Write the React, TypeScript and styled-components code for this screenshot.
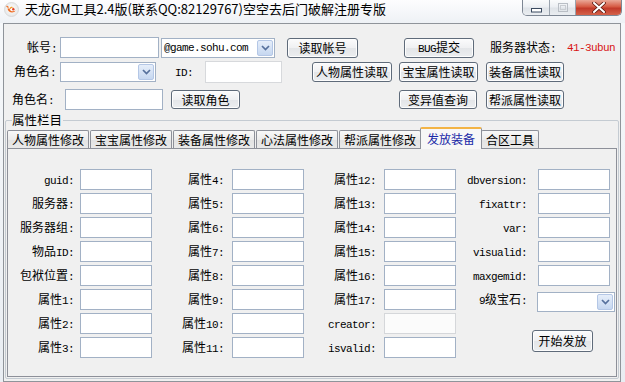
import React from "react";
import styled, { createGlobalStyle, css } from "styled-components";

const CJK = `"Noto Sans CJK SC", "Noto Sans", sans-serif`;
const MONO = `"Liberation Mono", "DejaVu Sans Mono", monospace`;

const GlobalStyle = createGlobalStyle`
  html, body { margin: 0; padding: 0; background: #ffffff; }
  body { font-family: ${CJK}; font-size: 12px; color: #000; }
  * { box-sizing: border-box; }
`;

const Latin = styled.span`
  font-family: ${MONO};
  font-size: 11px;
  letter-spacing: -0.6px;
`;

function Mixed({ text }: { text: string }) {
  const parts = text.match(/[\x00-\x7f]+|[^\x00-\x7f]+/g) || [];
  return (
    <>
      {parts.map((p, i) =>
        /^[\x00-\x7f]/.test(p) ? <Latin key={i}>{p}</Latin> : <span key={i}>{p}</span>
      )}
    </>
  );
}

/* ---------- window chrome ---------- */

const Window = styled.div`
  width: 625px;
  height: 382px;
  display: flex;
  flex-direction: column;
  overflow: hidden;
  background: linear-gradient(#f7f9fb, #e9edf2);
`;

const TitleBar = styled.div`
  height: 23px;
  flex: none;
  display: flex;
  align-items: flex-start;
  padding-left: 4px;
  background: linear-gradient(to bottom, #fdfdfe 0%, #f4f6f9 60%, #eef1f5 100%);
`;

const IconBox = styled.div`
  width: 15px;
  height: 15px;
  margin-top: 2px;
  flex: none;
  display: flex;
`;

const TitleText = styled.div`
  margin-left: 6px;
  margin-top: 1px;
  font-family: ${CJK};
  font-size: 13px;
  line-height: 16px;
  white-space: nowrap;
  color: #000;
`;

const Caption = styled.div`
  margin-left: auto;
  margin-right: 3px;
  display: flex;
  height: 16px;
  border: 1px solid #7d8693;
  border-top: none;
  border-radius: 0 0 5px 5px;
  overflow: hidden;
`;

const CapBtn = styled.div<{ $w: number; $close?: boolean }>`
  width: ${(p) => p.$w}px;
  display: flex;
  align-items: center;
  justify-content: center;
  background: ${(p) =>
    p.$close
      ? "linear-gradient(#eaa898 0%, #d65a43 45%, #c23a2a 55%, #d4624a 100%)"
      : "linear-gradient(#fafbfc 0%, #eceff3 45%, #dfe3e8 55%, #eaedf1 100%)"};
  & + & {
    border-left: 1px solid #9aa3ae;
  }
`;

const Client = styled.div`
  flex: 1;
  margin: 0 4px 0 3px;
  border: 1px solid #8f949a;
  background: #f0f0f0;
  display: flex;
  flex-direction: column;
`;

/* ---------- top form ---------- */

const Form = styled.div`
  padding-top: 13px;
  display: flex;
  flex-direction: column;
`;

const Row = styled.div<{ $h: number; $mt?: number }>`
  display: flex;
  align-items: center;
  height: ${(p) => p.$h}px;
  margin-top: ${(p) => p.$mt ?? 0}px;
`;

const Label = styled.div<{ $w?: number; $ml?: number; $align?: "left" | "right" }>`
  flex: none;
  ${(p) => (p.$w ? `width: ${p.$w}px;` : "")}
  margin-left: ${(p) => p.$ml ?? 0}px;
  text-align: ${(p) => p.$align ?? "left"};
  white-space: nowrap;
  line-height: 14px;
`;

const Status = styled.div<{ $ml: number }>`
  margin-left: ${(p) => p.$ml}px;
  color: #d81414;
  font-family: ${MONO};
  font-size: 11px;
  letter-spacing: -0.6px;
  white-space: nowrap;
`;

const TextBox = styled.input<{ $w: number; $h: number; $ml?: number; $dim?: boolean }>`
  flex: none;
  width: ${(p) => p.$w}px;
  height: ${(p) => p.$h}px;
  margin: 0 0 0 ${(p) => p.$ml ?? 0}px;
  padding: 0 2px;
  background: #fff;
  border: 1px solid ${(p) => (p.$dim ? "#d7d9dc" : "#a2b1c5")};
  border-radius: 0;
  outline: none;
  font: 12px ${CJK};
`;

const Combo = styled.div<{ $w: number; $ml?: number }>`
  flex: none;
  width: ${(p) => p.$w}px;
  height: 20px;
  margin-left: ${(p) => p.$ml ?? 0}px;
  display: flex;
  align-items: stretch;
  padding: 1px;
  background: #fff;
  border: 1px solid #a2b1c5;
`;

const ComboText = styled.div`
  flex: 1;
  padding-left: 1px;
  display: flex;
  align-items: center;
  white-space: nowrap;
  overflow: hidden;
`;

const DropBtn = styled.div`
  width: 16px;
  flex: none;
  display: flex;
  align-items: center;
  justify-content: center;
  border: 1px solid #b4c7e6;
  border-radius: 2px;
  background: linear-gradient(#e6eefa, #c6d7f0);
`;

const Btn = styled.button<{ $w: number; $h: number; $ml?: number }>`
  flex: none;
  width: ${(p) => p.$w}px;
  height: ${(p) => p.$h}px;
  margin-left: ${(p) => p.$ml ?? 0}px;
  padding: 0;
  border: 1px solid #5f6b7a;
  border-radius: 3px;
  background: linear-gradient(#fbfbfc 0%, #eff0f2 50%, #e3e5e8 51%, #eceef0 100%);
  box-shadow: inset 0 0 0 1px #fdfdfd;
  font-family: ${CJK};
  font-size: 12px;
  line-height: 1;
  color: #000;
  white-space: nowrap;
`;

/* ---------- group + tabs ---------- */

const GroupBox = styled.div`
  position: relative;
  flex: 1;
  margin: 10px 1px 2px 1px;
  padding: 6px 1px 1px 1px;
  border: 1px solid #c4cbd2;
  border-radius: 2px;
  display: flex;
  flex-direction: column;
`;

const Legend = styled.span`
  position: absolute;
  left: 6px;
  top: -9px;
  padding: 0 1px 0 0;
  background: #f0f0f0;
  line-height: 16px;
  font-size: 12.5px;
`;

const TabStrip = styled.div`
  height: 21px;
  display: flex;
  align-items: flex-end;
  gap: 1px;
  position: relative;
  z-index: 1;
`;

const Tab = styled.div<{ $active?: boolean }>`
  flex: none;
  height: 18px;
  padding: 0 4px;
  border: 1px solid #8d9099;
  border-bottom: none;
  border-radius: 2px 2px 0 0;
  background: linear-gradient(#f8f8f8, #ececec 50%, #e2e2e2 51%, #e9e9e9);
  line-height: 17px;
  font-size: 12px;
  white-space: nowrap;
  ${(p) =>
    p.$active &&
    css`
      height: 22px;
      margin: 0 -2px -1px;
      padding: 0 6px;
      line-height: 19px;
      color: #1a2aa8;
      background: #f7f7f7;
      border-top: 2px solid #f3b446;
    `}
`;

const Panel = styled.div`
  flex: 1;
  border: 1px solid #8d9099;
  background: #f0f0f0;
  padding-top: 20px;
`;

const FieldGrid = styled.div`
  display: grid;
  grid-template-columns: 72px 72px 80px 72px 80px 72px 82px 72px;
  grid-auto-rows: 21px;
  row-gap: 3px;
`;

const FieldLabel = styled.div<{ $r: number; $c: number; $pr: number }>`
  grid-row: ${(p) => p.$r};
  grid-column: ${(p) => p.$c};
  align-self: center;
  text-align: right;
  padding-right: ${(p) => p.$pr}px;
  white-space: nowrap;
  line-height: 14px;
`;

const Field = styled.input<{ $r: number; $c: number; $dim?: boolean }>`
  grid-row: ${(p) => p.$r};
  grid-column: ${(p) => p.$c};
  width: 72px;
  height: 21px;
  margin: 0;
  padding: 0 2px;
  background: ${(p) => (p.$dim ? "#fbfbfb" : "#fff")};
  border: 1px solid ${(p) => (p.$dim ? "#d5d7da" : "#a2b1c5")};
  border-radius: 0;
  outline: none;
  font: 12px ${CJK};
`;

const GridCombo = styled(Combo)<{ $r: number; $c: number }>`
  grid-row: ${(p) => p.$r};
  grid-column: ${(p) => p.$c};
  margin: 3px 0 0 -1px;
  align-self: start;
`;

const SendBtn = styled(Btn)`
  grid-row: 7 / span 2;
  grid-column: 7 / span 2;
  justify-self: end;
  align-self: start;
  margin: 17px 17px 0 0;
`;

/* ---------- icons ---------- */

const Chevron = () => (
  <svg width="9" height="6" viewBox="0 0 9 6">
    <polyline points="1,1 4.5,4.5 8,1" fill="none" stroke="#56709c" strokeWidth="1.7" />
  </svg>
);

const AppIcon = () => (
  <IconBox>
    <svg width="15" height="15" viewBox="0 0 15 15">
      <defs>
        <radialGradient id="ig" cx="0.5" cy="0.45" r="0.6">
          <stop offset="0" stopColor="#ffffff" />
          <stop offset="1" stopColor="#e4e4e4" />
        </radialGradient>
      </defs>
      <circle cx="7.5" cy="7.5" r="7" fill="url(#ig)" stroke="#d3d3d3" strokeWidth="0.8" />
      <path d="M3.5 6.5 C4 10.5 9.5 12 11.5 8.5 C9.5 10 6 9.5 5.5 6.5 Z" fill="#ef6a1e" />
      <path d="M5.5 6.5 C6 4.5 8.5 4 10 5.5 C8.5 5.3 7 5.7 6.4 7.2 Z" fill="#f39a2a" />
      <circle cx="9.3" cy="7.3" r="1.2" fill="#e2402a" />
      <path d="M2.5 4 L4.5 5.5" stroke="#ef6a1e" strokeWidth="1.2" />
    </svg>
  </IconBox>
);

const MinIcon = () => (
  <svg width="11" height="5" viewBox="0 0 11 5" style={{ marginTop: 5 }}>
    <rect x="0.5" y="0.5" width="10" height="3.5" fill="#ffffff" stroke="#3a4a60" />
  </svg>
);

const MaxIcon = () => (
  <svg width="10" height="9" viewBox="0 0 10 9">
    <rect x="0.5" y="0.5" width="9" height="8" fill="none" stroke="#b9bec5" />
    <rect x="2.5" y="2.5" width="5" height="4" fill="none" stroke="#c9cdd2" />
  </svg>
);

const CloseIcon = () => (
  <svg width="14" height="11" viewBox="0 0 14 11">
    <path d="M2 1 L12 10 M12 1 L2 10" stroke="#5a1a12" strokeWidth="3.6" strokeLinecap="round" />
    <path d="M2 1 L12 10 M12 1 L2 10" stroke="#ffffff" strokeWidth="2" strokeLinecap="round" />
  </svg>
);

/* ---------- data ---------- */

const fieldCols: string[][] = [
  ["guid:", "服务器:", "服务器组:", "物品ID:", "包袱位置:", "属性1:", "属性2:", "属性3:"],
  ["属性4:", "属性5:", "属性6:", "属性7:", "属性8:", "属性9:", "属性10:", "属性11:"],
  ["属性12:", "属性13:", "属性14:", "属性15:", "属性16:", "属性17:", "creator:", "isvalid:"],
  ["dbversion:", "fixattr:", "var:", "visualid:", "maxgemid:", "9级宝石:"],
];
const labelPad = [6, 8, 8, 11];

const tabs = ["人物属性修改", "宝宝属性修改", "装备属性修改", "心法属性修改", "帮派属性修改", "发放装备", "合区工具"];
const activeTab = 5;

export default function App() {
  return (
    <>
      <GlobalStyle />
      <Window>
        <TitleBar>
          <AppIcon />
          <TitleText>天龙GM工具2.4版(联系QQ:82129767)空空去后门破解注册专版</TitleText>
          <Caption>
            <CapBtn $w={26}>
              <MinIcon />
            </CapBtn>
            <CapBtn $w={26}>
              <MaxIcon />
            </CapBtn>
            <CapBtn $w={46} $close>
              <CloseIcon />
            </CapBtn>
          </Caption>
        </TitleBar>

        <Client>
          <Form>
            <Row $h={21}>
              <Label $w={53} $align="right">
                <Mixed text="帐号:" />
              </Label>
              <TextBox $w={99} $h={21} $ml={3} readOnly />
              <Combo $w={114} $ml={2}>
                <ComboText>
                  <Latin>@game.sohu.com</Latin>
                </ComboText>
                <DropBtn>
                  <Chevron />
                </DropBtn>
              </Combo>
              <Btn $w={71} $h={20} $ml={12}>读取帐号</Btn>
              <Btn $w={70} $h={20} $ml={46}>
                <Mixed text="BUG提交" />
              </Btn>
              <Label $w={66} $ml={16}>
                <Mixed text="服务器状态:" />
              </Label>
              <Status $ml={11}>41-3ubun</Status>
            </Row>

            <Row $h={22} $mt={3}>
              <Label $w={52} $align="right">
                <Mixed text="角色名:" />
              </Label>
              <Combo $w={96} $ml={4}>
                <ComboText />
                <DropBtn>
                  <Chevron />
                </DropBtn>
              </Combo>
              <Label $w={30} $ml={19}>
                <Mixed text="ID:" />
              </Label>
              <TextBox $w={77} $h={22} $dim readOnly />
              <Btn $w={80} $h={20} $ml={30}>人物属性读取</Btn>
              <Btn $w={79} $h={20} $ml={7}>宝宝属性读取</Btn>
              <Btn $w={78} $h={20} $ml={8}>装备属性读取</Btn>
            </Row>

            <Row $h={21} $mt={6}>
              <Label $w={53} $ml={8}>
                <Mixed text="角色名:" />
              </Label>
              <TextBox $w={98} $h={21} readOnly />
              <Btn $w={69} $h={19} $ml={8}>读取角色</Btn>
              <Btn $w={78} $h={19} $ml={159}>变异值查询</Btn>
              <Btn $w={78} $h={19} $ml={9}>帮派属性读取</Btn>
            </Row>
          </Form>

          <GroupBox>
            <Legend>属性栏目</Legend>
            <TabStrip>
              {tabs.map((t, i) => (
                <Tab key={t} $active={i === activeTab}>
                  {t}
                </Tab>
              ))}
            </TabStrip>
            <Panel>
              <FieldGrid>
                {fieldCols.map((col, c) =>
                  col.map((label, r) => (
                    <React.Fragment key={`${c}-${r}`}>
                      <FieldLabel $r={r + 1} $c={c * 2 + 1} $pr={labelPad[c]}>
                        <Mixed text={label} />
                      </FieldLabel>
                      {c === 3 && r === 5 ? (
                        <GridCombo $w={78} $r={r + 1} $c={c * 2 + 2}>
                          <ComboText />
                          <DropBtn>
                            <Chevron />
                          </DropBtn>
                        </GridCombo>
                      ) : (
                        <Field $r={r + 1} $c={c * 2 + 2} $dim={label === "creator:"} readOnly />
                      )}
                    </React.Fragment>
                  ))
                )}
                <SendBtn $w={61} $h={22}>开始发放</SendBtn>
              </FieldGrid>
            </Panel>
          </GroupBox>
        </Client>
      </Window>
    </>
  );
}
